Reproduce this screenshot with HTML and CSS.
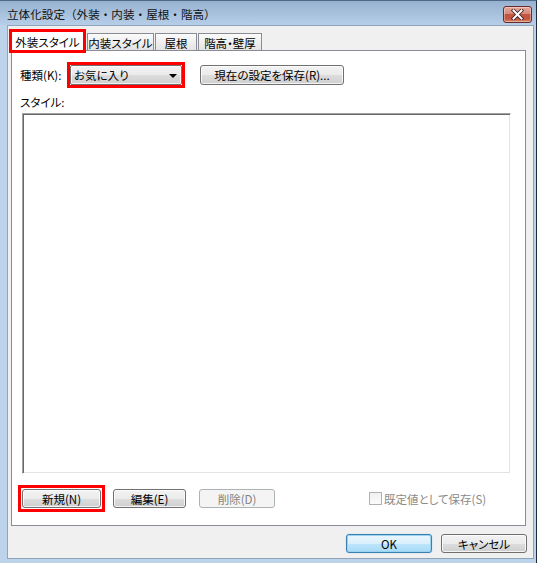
FILE: index.html
```html
<!DOCTYPE html>
<html lang="ja">
<head>
<meta charset="utf-8">
<title>立体化設定</title>
<link rel="stylesheet" href="styles.css">
</head>
<body>
<div class="window">
  <div class="titlebar">
    <span class="title">立体化設定（外装・内装・屋根・階高）</span>
    <div class="close">
      <svg width="13" height="11" viewBox="0 0 13 11">
        <path d="M2.5 1.5 L10.5 9.5 M10.5 1.5 L2.5 9.5" stroke="#3a1a1a" stroke-width="3.6" stroke-linecap="square"/>
        <path d="M2.5 1.5 L10.5 9.5 M10.5 1.5 L2.5 9.5" stroke="#ffffff" stroke-width="2" stroke-linecap="square"/>
      </svg>
    </div>
  </div>
  <div class="client">
    <div class="tabs">
      <div class="tab active hl">外装スタイル</div>
      <div class="tab t2">内装スタイル</div>
      <div class="tab t3">屋根</div>
      <div class="tab t4">階高・壁厚</div>
    </div>
    <div class="panel">
      <div class="row1">
        <span class="label">種類(K):</span>
        <div class="combo hl"><span>お気に入り</span><span class="arrow"></span></div>
        <div class="btn save">現在の設定を保存(R)...</div>
      </div>
      <div class="label style-label">スタイル:</div>
      <div class="listbox"></div>
      <div class="row2">
        <div class="btn small new hl2">新規(N)</div>
        <div class="btn small edit">編集(E)</div>
        <div class="btn small del disabled">削除(D)</div>
        <div class="check"><span class="box"></span><span>既定値として保存(S)</span></div>
      </div>
    </div>
    <div class="footer">
      <div class="btn small ok">OK</div>
      <div class="btn small cancel">キャンセル</div>
    </div>
  </div>
</div>
</body>
</html>
```
FILE: styles.css
```css
* { box-sizing: border-box; }
html, body { margin: 0; padding: 0; background: #ffffff; }
body {
  font-family: "Noto Sans CJK JP", "Noto Sans", sans-serif;
  font-size: 11.5px;
  color: #000;
  font-feature-settings: "palt";
}
.window {
  width: 537px;
  height: 563px;
  display: flex;
  flex-direction: column;
  background: #bdd3ea;
  border-right: 1px solid #1f2b38;
  border-top: 1px solid #4d6a88;
  position: relative;
}
.titlebar {
  height: 24px;
  display: flex;
  align-items: center;
  justify-content: space-between;
  padding-left: 7px;
  padding-right: 4px;
  background: linear-gradient(#97b2d0, #b6cee8);
}
.title {
  font-size: 11.6px;
  font-feature-settings: normal;
  color: #111;
  margin-top: 1px;
}
.close {
  width: 29px;
  height: 17px;
  margin-top: 3px;
  border: 1px solid #6a2a2a;
  border-radius: 3px;
  background: linear-gradient(#e6a99c 0%, #d48876 45%, #c25440 50%, #c4553f 80%, #d98e6c 100%);
  box-shadow: inset 0 0 0 1px rgba(255,255,255,0.35);
  display: flex;
  align-items: center;
  justify-content: center;
}
.client {
  margin-left: 7px;
  margin-right: 2px;
  height: 534px;
  border: 1px solid #8fa3ba;
  background: #f0f0f0;
  display: flex;
  flex-direction: column;
}
.tabs {
  margin-top: 5px;
  padding-left: 3px;
  display: flex;
  align-items: flex-end;
  height: 19px;
  position: relative;
  z-index: 2;
}
.tab {
  height: 17px;
  border: 1px solid #898c95;
  border-bottom: none;
  background: linear-gradient(#fbfbfb, #e3e3e3);
  display: flex;
  align-items: center;
  justify-content: center;
  padding-top: 1px;
}
.tab.active {
  width: 73px;
  height: 20px;
  margin-bottom: -1px;
  background: #ffffff;
  margin-right: 3px;
}
.tab.t2 { width: 67px; margin-right: 1px; }
.tab.t3 { width: 42px; margin-right: 1px; }
.tab.t4 { width: 64px; }
.hl, .hl2 { position: relative; }
.hl::after, .hl2::after {
  content: "";
  position: absolute;
  border: 3px solid #ff0000;
  pointer-events: none;
}
.hl::after { left: -4px; right: -4px; top: -4px; bottom: -4px; }
.tab.hl::after { left: -3px; right: -3px; top: -3px; bottom: -2px; }
.hl2::after { left: -5px; right: -5px; top: -5px; bottom: -5px; }
.panel {
  margin-left: 3px;
  width: 515px;
  height: 476px;
  border: 1px solid #898c95;
  background: #ffffff;
  padding: 14px 0 0 8px;
  display: flex;
  flex-direction: column;
}
.row1 {
  display: flex;
  align-items: center;
  height: 20px;
}
.label {
  line-height: 16px;
}
.row1 .label { width: 50px; }
.combo {
  width: 112px;
  height: 20px;
  border: 1px solid #707070;
  border-radius: 2px;
  background: linear-gradient(#f2f2f2 0%, #ebebeb 50%, #dddddd 51%, #cfcfcf 100%);
  box-shadow: inset 0 0 0 1px rgba(255,255,255,0.7);
  display: flex;
  align-items: center;
  justify-content: space-between;
  padding: 0 4px 0 3px;
}
.arrow {
  width: 0;
  height: 0;
  border-left: 4px solid transparent;
  border-right: 4px solid transparent;
  border-top: 4px solid #000;
  margin-top: 1px;
}
.btn {
  height: 20px;
  border: 1px solid #707070;
  border-radius: 3px;
  background: linear-gradient(#f2f2f2 0%, #ebebeb 50%, #dddddd 51%, #cfcfcf 100%);
  box-shadow: inset 0 0 0 1px rgba(255,255,255,0.75);
  display: flex;
  align-items: center;
  justify-content: center;
  color: #000;
}
.btn.small { height: 19px; }
.save { width: 144px; margin-left: 18px; }
.style-label { margin-top: 9px; }
.listbox {
  margin-top: 3px;
  margin-left: 2px;
  width: 489px;
  height: 361px;
  border-top: 1px solid #a0a0a0;
  border-left: 1px solid #a0a0a0;
  border-right: 1px solid #ffffff;
  border-bottom: 1px solid #ffffff;
  box-shadow: inset 1px 1px 0 #696969, inset -1px -1px 0 #e3e3e3;
  background: #ffffff;
}
.row2 {
  margin-top: 15px;
  margin-left: 2px;
  display: flex;
  align-items: center;
  height: 19px;
}
.new { width: 79px; }
.edit { width: 73px; margin-left: 12px; }
.del { width: 76px; margin-left: 13px; }
.btn.disabled {
  border-color: #adb2b5;
  background: #f4f4f4;
  box-shadow: none;
  color: #838383;
}
.check {
  margin-left: 94px;
  display: flex;
  align-items: center;
  color: #8a8a8a;
}
.box {
  width: 13px;
  height: 13px;
  border: 1px solid #b1b1b1;
  background: linear-gradient(#f0f0f0, #fbfbfb);
  margin-right: 2px;
}
.footer {
  margin-top: 8px;
  display: flex;
  justify-content: flex-end;
  padding-right: 6px;
}
.ok {
  width: 86px;
  border-color: #3c7fb1;
  background: linear-gradient(#eaf6fd 0%, #d9f0fc 50%, #bee6fd 51%, #a7d9f5 100%);
  box-shadow: inset 0 0 0 1px #99d3f0, 0 0 1px #5cb8e8;
}
.cancel { width: 86px; margin-left: 9px; }
```
